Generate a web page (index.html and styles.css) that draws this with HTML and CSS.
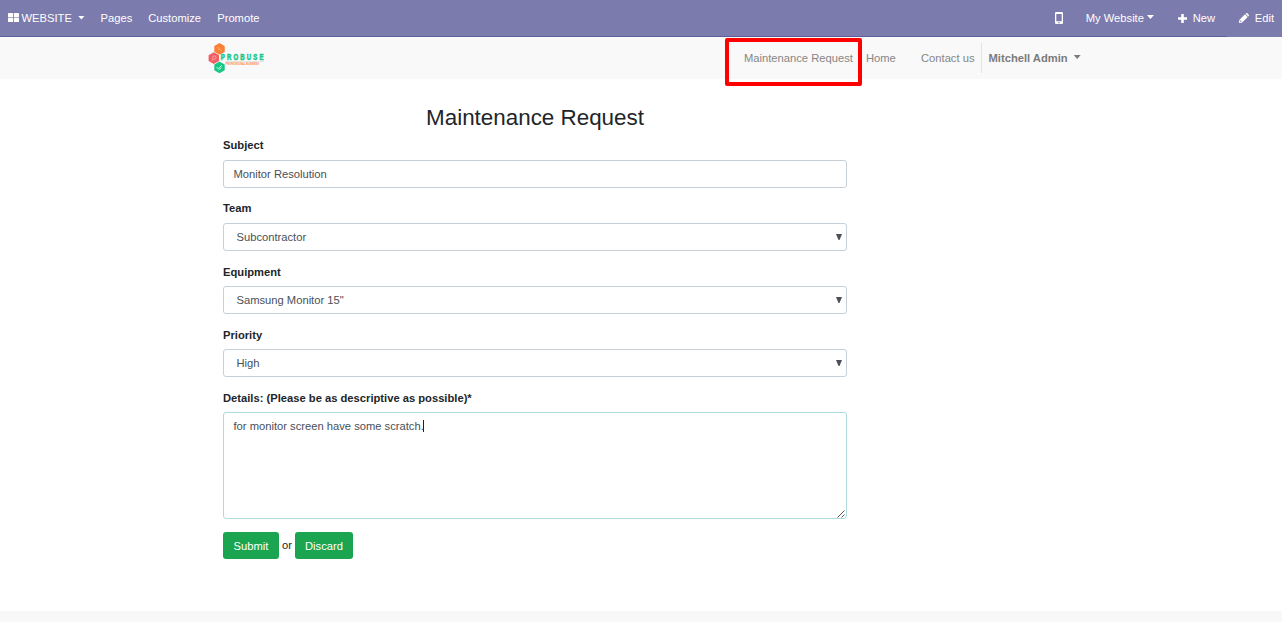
FILE: index.html
```html
<!DOCTYPE html>
<html lang="en">
<head>
<meta charset="utf-8">
<title>Maintenance Request</title>
<link rel="stylesheet" href="styles.css">
</head>
<body>
<nav class="toolbar">
  <a class="tool apps">
    <svg width="11" height="9" viewBox="0 0 11 9" fill="currentColor"><rect width="5" height="4.300" rx=".6"/><rect x="5.800" width="5.200" height="4.300" rx=".6"/><rect y="4.800" width="5" height="4.200" rx=".6"/><rect x="5.800" y="4.800" width="5.200" height="4.200" rx=".6"/></svg>
    <span class="apps-label">WEBSITE</span><i class="caret"></i>
  </a>
  <a class="tool pages">Pages</a>
  <a class="tool customize">Customize</a>
  <a class="tool">Promote</a>
  <span class="spacer"></span>
  <a class="tool mobile"><svg width="8" height="12" viewBox="0 0 8 12"><path fill="currentColor" fill-rule="evenodd" d="M1.2 0h5.6Q8 0 8 1.2v9.6Q8 12 6.800 12H1.200Q0 12 0 10.800V1.200Q0 0 1.200 0ZM1.300 2v7.300h5.400V2ZM4 10a.7.7 0 1 0 .01 0Z"/></svg></a>
  <a class="tool site">My Website<i class="caret"></i></a>
  <a class="tool new"><svg width="9" height="9" viewBox="0 0 9 9" fill="currentColor"><path d="M3.200 0h2.600v3.200H9v2.600H5.800V9H3.200V5.800H0V3.200h3.200z"/></svg>New</a>
  <a class="tool edit"><svg width="10" height="10" viewBox="0 0 10 10"><path fill="currentColor" fill-rule="evenodd" d="M6 1.300 8.700 4 2.900 9.700 0 10 .3 7.100ZM6.600.7 7.200.2Q7.800 -.3 8.300.2L9.800 1.700Q10.200 2.200 9.800 2.700L9.300 3.400ZM1.200 7.800 1 8.400h.6v.6l.7-.2L2.700 8.400 1.600 7.300Z"/></svg>Edit</a>
</nav>
<header class="site-header">
  <div class="header-inner">
    <svg class="logo" width="58" height="32" viewBox="0 0 58 32">
      <path fill="#fa8035" d="M11.500 1 16.700 4v5.800l-5.200 3-5.200-3V4z"/>
      <path fill="#f15e64" d="M5.800 10.200 11 13.200V19l-5.200 3-5.200-3v-5.800z"/>
      <path fill="#16c784" d="M11.500 19.400l5.200 3v5.800l-5.200 3-5.200-3v-5.800z"/>
      <g fill="none" stroke="#fff" stroke-width=".8" opacity=".5"><path d="m9.500 5 4 4M10 8.500l1-1"/><circle cx="6.300" cy="15.600" r="1.700"/><path d="m5 17-1.500 1.500"/></g>
      <path fill="none" stroke="#fff" stroke-width="1" opacity=".75" d="m8.500 25.500 2 1 3.500-3.500M10.500 28l3-2.500"/>
      <text class="logo-name" transform="translate(12.700 18) scale(.72 1)" textLength="59.500" lengthAdjust="spacing">PROBUSE</text>
      <path stroke="#ddd" stroke-width=".7" d="M17 19.500h39"/>
      <text class="logo-tag" x="17.500" y="23.400" textLength="33.500" lengthAdjust="spacingAndGlyphs">PROFESSIONAL BUSINESS</text>
    </svg>
    <nav class="menu">
      <a class="menu-request">Maintenance Request</a>
      <a class="menu-home">Home</a>
      <a class="menu-contact">Contact us</a>
      <a class="menu-user">Mitchell Admin<i class="caret"></i></a>
    </nav>
  </div>
  <div class="highlight"></div>
</header>
<main class="form">
  <h1>Maintenance Request</h1>
  <div class="group"><div class="label">Subject</div><div class="control">Monitor Resolution</div></div>
  <div class="group"><div class="label">Team</div><div class="control select">Subcontractor<i class="arrow"></i></div></div>
  <div class="group"><div class="label low">Equipment</div><div class="control select">Samsung Monitor 15"<i class="arrow"></i></div></div>
  <div class="group"><div class="label low">Priority</div><div class="control select">High<i class="arrow"></i></div></div>
  <div class="group tall"><div class="label low">Details: (Please be as descriptive as possible)*</div>
    <div class="control details">for monitor screen have some scratch.<i class="cursor"></i>
      <svg class="grip" width="8" height="8" viewBox="0 0 8 8" stroke="#444" stroke-width=".9"><path d="M.5 7.500l7-7M4.500 7.500l3-3"/></svg></div></div>
  <div class="actions"><a class="button submit">Submit</a><span>or</span><a class="button discard">Discard</a></div>
</main>
<footer class="footer"></footer>
</body>
</html>
```
FILE: styles.css
```css
* { box-sizing: border-box; }
body {
  margin: 0;
  height: 622px;
  display: flex;
  flex-direction: column;
  overflow: hidden;
  background: #fff;
  color: #212529;
  font: 11.2px/17px "Liberation Sans", Arial, sans-serif;
}
svg { display: block; flex: none; }
.toolbar {
  height: 37px;
  flex: none;
  display: flex;
  align-items: center;
  padding: 0 8px;
  background: #7c7bad;
  border-bottom: 1px solid #5f5e97;
  color: #fff;
  white-space: nowrap;
}
.tool { display: flex; align-items: center; }
.caret {
  flex: none;
  width: 7px;
  height: 4px;
  margin-top: -2px;
  background: currentColor;
  clip-path: polygon(0 0, 100% 0, 50% 100%);
}
.apps { width: 92.500px; }
.apps svg { margin-bottom: 2px; }
.apps .caret { margin-top: -1px; }
.apps-label { margin: 0 6px 0 2.500px; }
.pages { width: 47.700px; }
.customize { width: 69px; }
.spacer { flex: 1; }
.mobile { width: 31px; margin-right: .3px; }
.mobile svg { margin: 0 0 1px .6px; }
.site { width: 92px; gap: 3px; }
.new { width: 49px; gap: 6px; }
.edit {
  gap: 6px;
  height: 37px;
  margin: 0 -8px -1px 0;
  padding: 0 8px 1px 12px;
  align-self: flex-start;
  background: #7c7bad;
}
.site-header {
  position: relative;
  height: 42px;
  flex: none;
  background: #f9f9f9;
}
.header-inner {
  height: 42px;
  display: flex;
  align-items: center;
  justify-content: space-between;
  width: 873px;
  margin-left: 208px;
}
.logo-name { font: bold 8.300px "Liberation Sans", Arial, sans-serif; fill: #1cc78a; stroke: #1cc78a; stroke-width: .6px; }
.logo-tag { font: bold 3px "Liberation Sans", Arial, sans-serif; fill: #f98b50; }
.menu { display: flex; align-items: center; color: #868686; white-space: nowrap; }
.menu-request { width: 122px; }
.menu-home { width: 55px; }
.menu-contact { width: 60px; }
.menu-user {
  display: flex;
  align-items: center;
  gap: 6px;
  width: 100px;
  height: 30px;
  padding-left: 6.500px;
  border-left: 1px solid #e4e4e4;
  font-weight: bold;
  color: #7b7b7b;
}
.highlight {
  position: absolute;
  left: 725px;
  top: 1px;
  width: 137px;
  height: 48px;
  border: 4px solid #f00;
  border-radius: 2px;
}
.form { width: 624px; margin-left: 223px; padding-top: 25px; flex: 1; }
h1 {
  margin: 0 0 6px;
  font-size: 22.400px;
  line-height: 27px;
  font-weight: 400;
  text-align: center;
}
.group { height: 63px; }
.tall { height: 143px; }
.label { height: 23px; font-weight: bold; }
.low { padding-top: 1px; }
.control {
  position: relative;
  height: 28px;
  padding: 5px 9.500px;
  border: 1px solid #c8d0d7;
  border-radius: 3px;
  color: #495057;
}
.select { padding-left: 12.500px; display: flex; justify-content: space-between; }
.arrow {
  width: 6px;
  height: 6px;
  margin: 5px -5.500px 0 0;
  background: #495057;
  clip-path: polygon(0 0, 100% 0, 58% 100%, 42% 100%);
}
.details { display: flex; height: 107px; border-color: #addbe0; }
.cursor { width: 1px; height: 12px; margin: 2px 0 0 -1px; background: #222; }
.grip { position: absolute; right: 1px; bottom: 0; }
.actions { display: flex; align-items: center; gap: 3px; }
.button { height: 27px; padding: 6px 0 4px; border-radius: 3px; background: #1ca551; color: #fff; text-align: center; }
.submit { width: 56px; }
.discard { width: 58px; }
.footer { height: 11px; flex: none; background: #f8f8f8; }
```
